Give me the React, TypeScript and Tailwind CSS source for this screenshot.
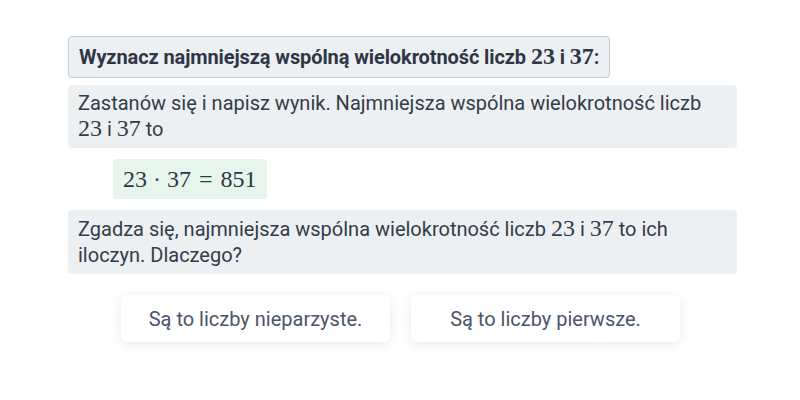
import React from 'react'

function M({ children }: { children: React.ReactNode }) {
  return <span className="font-['Liberation_Serif',serif] text-[24px] leading-none tracking-normal">{children}</span>
}

export default function App() {
  return (
    <div className="w-[800px] h-[400px] bg-white font-['Roboto',sans-serif] text-[#2d3748]">
      <div className="ml-[68px] w-[669px] pt-[36px] flex flex-col">
        {/* Task */}
        <div className="self-start h-[42px] flex items-center px-[10px] bg-[#edf0f2] border border-[#c6ccd2] rounded-[4px] text-[20px] font-bold tracking-[-0.1px]">
          <span>
            Wyznacz najmniejszą wspólną wielokrotność liczb <M>23</M> i <M>37</M>:
          </span>
        </div>

        {/* Hint */}
        <div className="mt-[7px] h-[63px] bg-[#edf0f2] rounded-[4px] px-[10px] pt-[5px] text-[20px] leading-[26px] text-[#333c49]">
          Zastanów się i napisz wynik. Najmniejsza wspólna wielokrotność liczb
          <br />
          <M>23</M> i <M>37</M> to
        </div>

        {/* Answer */}
        <div className="mt-[11px] ml-[45px] self-start h-[40px] flex items-center px-[10px] bg-[#e6f6ed] rounded-[4px]">
          <span className="font-['Liberation_Serif',serif] text-[24px] leading-none">
            23<span className="mx-[6px]">·</span>37<span className="mx-[8px]">=</span>851
          </span>
        </div>

        {/* Feedback */}
        <div className="mt-[11px] h-[64px] bg-[#edf0f2] rounded-[4px] px-[10px] pt-[6px] text-[20px] leading-[26px] text-[#333c49]">
          Zgadza się, najmniejsza wspólna wielokrotność liczb <M>23</M> i <M>37</M> to ich
          <br />
          iloczyn. Dlaczego?
        </div>
      </div>

      {/* Options */}
      <div className="mt-[21px] flex justify-center gap-[21px] pl-[1px]">
        <button className="w-[269px] h-[47px] bg-white rounded-[6px] shadow-[0_2px_12px_rgba(0,0,0,0.09)] text-[20px] text-[#4a5568]">
          Są to liczby nieparzyste.
        </button>
        <button className="w-[269px] h-[47px] bg-white rounded-[6px] shadow-[0_2px_12px_rgba(0,0,0,0.09)] text-[20px] text-[#4a5568]">
          Są to liczby pierwsze.
        </button>
      </div>
    </div>
  )
}
